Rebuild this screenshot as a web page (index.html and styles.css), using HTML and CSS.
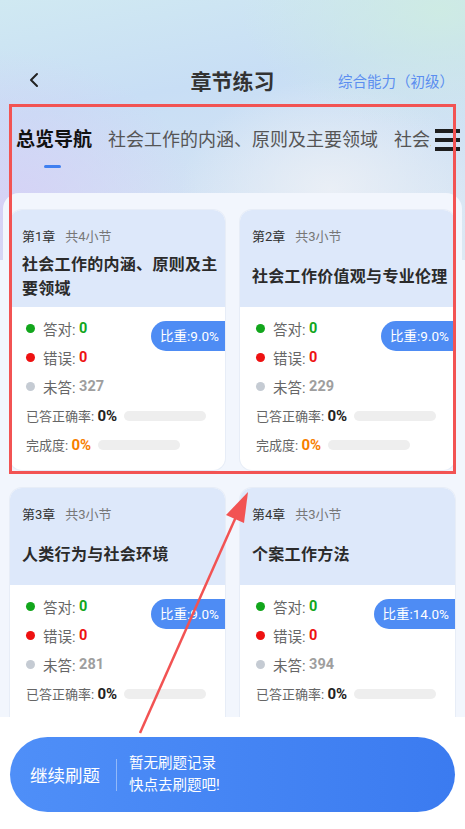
FILE: index.html
```html
<!DOCTYPE html>
<html lang="zh-CN">

<head>
    <meta charset="UTF-8">
    <meta name="viewport" content="width=device-width, initial-scale=1.0">
    <title>章节练习</title>
    <link rel="stylesheet" href="styles.css">
</head>

<body>

    <div class="page">
        <!-- Top bar -->
        <header class="topbar">
            <span class="back">
                <svg width="12" height="16" viewBox="0 0 12 16">
                    <polyline points="9,2 3,8 9,14" fill="none" stroke="#222" stroke-width="2" stroke-linecap="round" stroke-linejoin="round"/>
                </svg>
            </span>
            <h1 class="title">章节练习</h1>
            <span class="level">综合能力（初级）</span>
        </header>

        <!-- Chapter tabs -->
        <nav class="tabs">
            <div class="tab-list">
                <span class="tab active">总览导航</span>
                <span class="tab">社会工作的内涵、原则及主要领域</span>
                <span class="tab">社会工作价值观与专业伦理</span>
            </div>
            <span class="menu"><i></i><i></i><i></i></span>
        </nav>

        <!-- Chapter cards -->
        <main class="panel">
            <div class="grid">
                <div class="card">
                    <div class="card-head">
                        <div class="meta"><span class="num">第1章</span><span class="count">共4小节</span></div>
                        <div class="name">社会工作的内涵、原则及主要领域</div>
                    </div>
                    <div class="card-body">
                        <span class="badge">比重:9.0%</span>
                        <div class="row"><i class="dot green"></i>答对: <b class="val green-text">0</b></div>
                        <div class="row"><i class="dot red"></i>错误: <b class="val red-text">0</b></div>
                        <div class="row"><i class="dot grey"></i>未答: <b class="val grey-text">327</b></div>
                        <div class="row rate">已答正确率: <b class="val dark-text">0%</b><span class="bar"></span></div>
                        <div class="row rate">完成度: <b class="val orange-text">0%</b><span class="bar"></span></div>
                    </div>
                </div>

                <div class="card">
                    <div class="card-head">
                        <div class="meta"><span class="num">第2章</span><span class="count">共3小节</span></div>
                        <div class="name">社会工作价值观与专业伦理</div>
                    </div>
                    <div class="card-body">
                        <span class="badge">比重:9.0%</span>
                        <div class="row"><i class="dot green"></i>答对: <b class="val green-text">0</b></div>
                        <div class="row"><i class="dot red"></i>错误: <b class="val red-text">0</b></div>
                        <div class="row"><i class="dot grey"></i>未答: <b class="val grey-text">229</b></div>
                        <div class="row rate">已答正确率: <b class="val dark-text">0%</b><span class="bar"></span></div>
                        <div class="row rate">完成度: <b class="val orange-text">0%</b><span class="bar"></span></div>
                    </div>
                </div>

                <div class="card">
                    <div class="card-head">
                        <div class="meta"><span class="num">第3章</span><span class="count">共3小节</span></div>
                        <div class="name">人类行为与社会环境</div>
                    </div>
                    <div class="card-body">
                        <span class="badge">比重:9.0%</span>
                        <div class="row"><i class="dot green"></i>答对: <b class="val green-text">0</b></div>
                        <div class="row"><i class="dot red"></i>错误: <b class="val red-text">0</b></div>
                        <div class="row"><i class="dot grey"></i>未答: <b class="val grey-text">281</b></div>
                        <div class="row rate">已答正确率: <b class="val dark-text">0%</b><span class="bar"></span></div>
                        <div class="row rate">完成度: <b class="val orange-text">0%</b><span class="bar"></span></div>
                    </div>
                </div>

                <div class="card">
                    <div class="card-head">
                        <div class="meta"><span class="num">第4章</span><span class="count">共3小节</span></div>
                        <div class="name">个案工作方法</div>
                    </div>
                    <div class="card-body">
                        <span class="badge">比重:14.0%</span>
                        <div class="row"><i class="dot green"></i>答对: <b class="val green-text">0</b></div>
                        <div class="row"><i class="dot red"></i>错误: <b class="val red-text">0</b></div>
                        <div class="row"><i class="dot grey"></i>未答: <b class="val grey-text">394</b></div>
                        <div class="row rate">已答正确率: <b class="val dark-text">0%</b><span class="bar"></span></div>
                        <div class="row rate">完成度: <b class="val orange-text">0%</b><span class="bar"></span></div>
                    </div>
                </div>
            </div>
        </main>
    </div>

    <!-- Bottom action -->
    <div class="bottom-bar">
        <div class="continue">
            <span class="continue-label">继续刷题</span>
            <span class="divider"></span>
            <span class="tips">暂无刷题记录<br>快点去刷题吧!</span>
        </div>
    </div>

    <!-- Annotation marks -->
    <div class="mark-box"></div>
    <svg class="mark-arrow" width="465" height="829" viewBox="0 0 465 829">
        <line x1="140" y1="733" x2="239" y2="510" stroke="#f25353" stroke-width="2.5"/>
        <polygon points="248,492 226,515 244,523" fill="#f25353"/>
    </svg>

</body>

</html>
```

FILE: styles.css
```css
/* General Reset */
body {
    margin: 0;
    height: 829px;
    overflow: hidden;
    font-family: Roboto, "Noto Sans CJK SC", sans-serif;
    background: #f2f6fd;
    color: #333;
}

.page {
    min-height: 829px;
    background:
        radial-gradient(ellipse 200px 160px at 0 210px, rgba(214, 208, 246, 0.95), rgba(214, 208, 246, 0)),
        radial-gradient(ellipse 200px 120px at 440px 10px, rgba(206, 236, 226, 0.9), rgba(206, 236, 226, 0)),
        radial-gradient(ellipse 150px 110px at 330px 190px, rgba(236, 240, 246, 0.9), rgba(236, 240, 246, 0)),
        linear-gradient(170deg, #d0e9f2 0%, #c8def5 35%, #d3e3f4 70%, #dde9f4 100%);
    background-repeat: no-repeat;
    background-size: 100% 260px, 100% 260px, 100% 260px, 100% 260px;
}

/* Top bar */
.topbar {
    display: grid;
    grid-template-columns: 1fr auto 1fr;
    align-items: center;
    height: 48px;
    padding: 56px 11px 0;
}

.back {
    display: flex;
    padding-left: 17px;
}

.title {
    margin: 0;
    font-size: 21px;
    font-weight: bold;
    color: #333;
}

.level {
    justify-self: end;
    font-size: 14.5px;
    color: #5b8ef0;
}

/* Tabs */
.tabs {
    display: flex;
    height: 67px;
    margin-top: 22px;
    padding-left: 16px;
    box-sizing: border-box;
}

.tab-list {
    display: flex;
    gap: 16px;
    flex: 1;
    overflow: hidden;
    white-space: nowrap;
}

.tab {
    position: relative;
    font-size: 18px;
    line-height: 28px;
    height: 28px;
    color: #555;
}

.tab.active {
    font-size: 19px;
    font-weight: bold;
    color: #111;
}

.tab.active::after {
    content: "";
    position: absolute;
    left: 28px;
    top: 39px;
    width: 17px;
    height: 3px;
    border-radius: 2px;
    background: #3f7ff0;
}

.menu {
    display: flex;
    flex-direction: column;
    gap: 5px;
    width: 25px;
    padding: 3px 5px 0 4px;
}

.menu i {
    display: block;
    height: 4px;
    background: #1e1e1e;
}

/* Card panel */
.panel {
    margin: 0 3px;
    padding: 17px 7px 0;
    background: #f2f6fd;
    border-radius: 16px 16px 0 0;
}

.grid {
    display: grid;
    grid-template-columns: 1fr 1fr;
    gap: 18px 15px;
}

.card {
    background: #fff;
    border-radius: 12px;
    overflow: hidden;
    box-shadow: 0 0 0 1px #e7edf7;
}

.card-head {
    display: flex;
    flex-direction: column;
    height: 97px;
    padding: 18px 6px 0 12px;
    box-sizing: border-box;
    background: #dde8fa;
}

.meta {
    display: flex;
    gap: 10px;
    font-size: 13px;
    line-height: 18px;
}

.num {
    color: #333;
}

.count {
    color: #777;
}

.name {
    display: flex;
    align-items: center;
    flex: 1;
    font-size: 16px;
    letter-spacing: 0.3px;
    line-height: 24px;
    font-weight: bold;
    color: #2b2b2b;
}

.card-body {
    position: relative;
    padding: 7px 0 11px 16px;
}

.badge {
    position: absolute;
    top: 14px;
    right: 0;
    height: 30px;
    line-height: 30px;
    padding: 0 6px 0 9px;
    border-radius: 15px 0 0 15px;
    background: #4e8cf4;
    color: #fff;
    font-size: 13.5px;
}

.row {
    display: flex;
    align-items: center;
    height: 29px;
    font-size: 14.5px;
    color: #666;
    white-space: pre;
}

.row.rate {
    font-size: 13px;
}

.row.rate .val {
    font-size: 15px;
}

.dot {
    flex: none;
    width: 9px;
    height: 9px;
    margin-right: 8px;
    border-radius: 50%;
}

.dot.green {
    background: #12a61c;
}

.dot.red {
    background: #ee1111;
}

.dot.grey {
    background: #c5cbd3;
}

.val {
    font-weight: bold;
}

.green-text {
    color: #12a61c;
}

.red-text {
    color: #ee1111;
}

.grey-text {
    color: #9e9e9e;
}

.dark-text {
    color: #222;
}

.orange-text {
    color: #f77f00;
}

.bar {
    width: 82px;
    height: 10px;
    margin-left: 7px;
    border-radius: 5px;
    background: #eeeeee;
}

/* Bottom action */
.bottom-bar {
    position: fixed;
    left: 0;
    right: 0;
    bottom: 0;
    height: 112px;
    padding: 20px 10px 0;
    box-sizing: border-box;
    background: #fff;
}

.continue {
    display: flex;
    align-items: center;
    height: 75px;
    padding-left: 20px;
    border-radius: 38px;
    background: linear-gradient(90deg, #4f8ff8, #3b7bf0);
    color: #fff;
}

.continue-label {
    font-size: 17.5px;
}

.divider {
    width: 1px;
    height: 32px;
    margin: 0 12px 0 16px;
    background: rgba(255, 255, 255, 0.4);
}

.tips {
    font-size: 14.5px;
    line-height: 22px;
}

/* Annotation marks */
.mark-box {
    position: absolute;
    left: 9px;
    top: 104px;
    width: 447px;
    height: 370px;
    border: 3px solid #f25353;
    box-sizing: border-box;
}

.mark-arrow {
    position: absolute;
    top: 0;
    left: 0;
    pointer-events: none;
}
```
